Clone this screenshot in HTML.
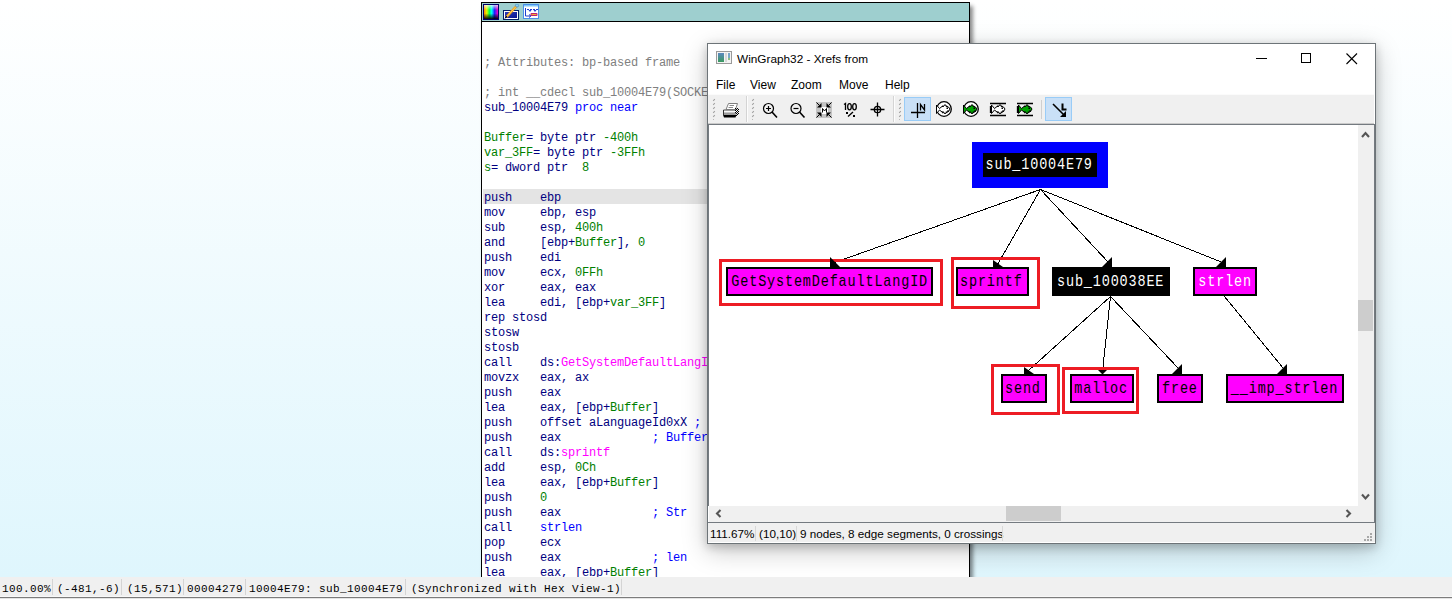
<!DOCTYPE html>
<html><head><meta charset="utf-8">
<style>
*{margin:0;padding:0;box-sizing:border-box}
html,body{width:1452px;height:599px;overflow:hidden}
body{position:relative;background:linear-gradient(to bottom,#ffffff 0px,#dff6fd 577px);font-family:"Liberation Sans",sans-serif}
.abs{position:absolute}
/* IDA window */
#ida{position:absolute;left:481px;top:2px;width:489px;height:620px;border:1px solid #000;background:#fff;box-shadow:3px 4px 4px rgba(0,0,0,.45)}
#idatitle{position:absolute;left:0;top:0;width:487px;height:19px;background:#9ecfcf;border-bottom:1px solid #000}
#code{position:absolute;left:2px;top:0;font-family:"Liberation Mono",monospace;font-size:12px;letter-spacing:-0.2px;color:#000080}
#code div{height:15px;line-height:19px;white-space:pre}
.g{color:#808080}.b{color:#0000ff}.n{color:#000080}.gr{color:#008000}.m{color:#ff00ff}
.hl{background:#e4e4e4;width:487px;margin-left:-1px;padding-left:1px}
/* status bar */
#sb{position:absolute;left:0;top:577px;width:1452px;height:22px;background:linear-gradient(to bottom,#f0f0f0 0,#f0f0f0 19px,#f8f8f8 19px,#f8f8f8 20px,#7c7c7c 20px,#7c7c7c 21px,#e4e4e4 21px);font-family:"Liberation Mono",monospace;font-size:11px;letter-spacing:0.4px;color:#000}
#sb span{position:absolute;top:6px;white-space:pre}
#sb i{position:absolute;top:2px;width:1px;height:16px;background:#d4d4d4}
/* wingraph */
#wg{position:absolute;left:707px;top:43px;width:669px;height:501px;border:1px solid #6d7478;background:#fff;box-shadow:0 3px 9px rgba(0,0,0,.2),0 7px 24px rgba(0,0,0,.22)}
.menu{top:78px;font-size:12px;color:#000}
.wgs{top:527px;font-size:11.7px;color:#000;white-space:pre}
</style></head><body>

<div id="ida">
  <div id="idatitle"></div>
  <svg class="abs" style="left:1px;top:1px" width="60" height="18" viewBox="483 4 60 18">
  <defs>
   <linearGradient id="hue" x1="0" x2="1" y1="0" y2="0">
    <stop offset="0" stop-color="#ff8000"/><stop offset=".2" stop-color="#e0ff00"/><stop offset=".38" stop-color="#00ff40"/><stop offset=".55" stop-color="#00ffff"/><stop offset=".75" stop-color="#2020ff"/><stop offset="1" stop-color="#ff00c0"/>
   </linearGradient>
   <linearGradient id="shade" x1="0" x2="0" y1="0" y2="1">
    <stop offset="0" stop-color="#fff" stop-opacity=".75"/><stop offset=".35" stop-color="#fff" stop-opacity="0"/><stop offset=".6" stop-color="#000" stop-opacity="0"/><stop offset="1" stop-color="#000" stop-opacity=".95"/>
   </linearGradient>
   <linearGradient id="blu" x1="0" x2="1" y1="0" y2="1"><stop offset="0" stop-color="#2a3ab8"/><stop offset="1" stop-color="#0a1690"/></linearGradient>
  </defs>
  <rect x="483" y="4" width="16" height="16" fill="#00006a"/>
  <rect x="484" y="5" width="14" height="14" fill="url(#hue)"/>
  <rect x="484" y="5" width="14" height="14" fill="url(#shade)"/>
  <rect x="503" y="10" width="16" height="10" fill="#00206a"/>
  <rect x="504" y="11" width="14" height="8" fill="#fff"/>
  <rect x="505" y="12" width="12" height="6" fill="url(#blu)"/>
  <path d="M506.5 17 L516.5 6" stroke="#f0a020" stroke-width="2.6"/>
  <path d="M506.5 17 L516.5 6" stroke="#ffe070" stroke-width="0.8"/>
  <circle cx="517" cy="5.5" r="1.6" fill="#8ad0f0" stroke="#3a80c0" stroke-width=".6"/>
  <path d="M505 18.5 L507 16" stroke="#000" stroke-width="1"/>
  <rect x="523" y="4" width="16" height="15" rx="0.5" fill="#4a8ee8"/>
  <rect x="524" y="6" width="14" height="12" fill="#fff"/>
  <rect x="524" y="5" width="14" height="1.5" fill="#7ec8f8"/>
  <path d="M525.5 8 V16 H530" stroke="#2040d0" stroke-width="1" fill="none"/>
  <path d="M529 14.5 L531 16 L529 17.5" stroke="#2040d0" stroke-width="1" fill="none"/>
  <path d="M527 9.5 H538" stroke="#2040d0" stroke-width="1" stroke-dasharray="2 1"/><path d="M528.5 10 L530 12 L531.5 10 Z M533.5 10 L535 12 L536.5 10 Z" fill="#2040d0"/>
  <rect x="530.5" y="13" width="7" height="3" rx="1" fill="#c02070"/>
  <rect x="531.5" y="14" width="5" height="1" fill="#f0b030"/>
  </svg>
  <div id="code" style="top:21px">
<div> </div>
<div> </div>
<div class="g">; Attributes: bp-based frame</div>
<div> </div>
<div class="g">; int __cdecl sub_10004E79(SOCKET s)</div>
<div>sub_10004E79 <span class="b">proc near</span></div>
<div> </div>
<div><span class="gr">Buffer</span>= byte ptr <span class="gr">-400h</span></div>
<div><span class="gr">var_3FF</span>= byte ptr <span class="gr">-3FFh</span></div>
<div><span class="gr">s</span>= dword ptr  <span class="gr">8</span></div>
<div> </div>
<div class="hl">push    ebp</div>
<div>mov     ebp, esp</div>
<div>sub     esp, <span class="gr">400h</span></div>
<div>and     [ebp+<span class="gr">Buffer</span>], <span class="gr">0</span></div>
<div>push    edi</div>
<div>mov     ecx, <span class="gr">0FFh</span></div>
<div>xor     eax, eax</div>
<div>lea     edi, [ebp+<span class="gr">var_3FF</span>]</div>
<div>rep stosd</div>
<div>stosw</div>
<div>stosb</div>
<div>call    ds:<span class="m">GetSystemDefaultLangID</span></div>
<div>movzx   eax, ax</div>
<div>push    eax</div>
<div>lea     eax, [ebp+<span class="gr">Buffer</span>]</div>
<div>push    offset aLanguageId0xX <span class="b">; "Language Id: 0x%X"</span></div>
<div>push    eax             <span class="b">; Buffer</span></div>
<div>call    ds:<span class="m">sprintf</span></div>
<div>add     esp, <span class="gr">0Ch</span></div>
<div>lea     eax, [ebp+<span class="gr">Buffer</span>]</div>
<div>push    <span class="gr">0</span></div>
<div>push    eax             <span class="b">; Str</span></div>
<div>call    <span class="b">strlen</span></div>
<div>pop     ecx</div>
<div>push    eax             <span class="b">; len</span></div>
<div>lea     eax, [ebp+<span class="gr">Buffer</span>]</div>
<div>push    [ebp+<span class="gr">s</span>]</div>
  </div>
</div>

<div id="sb">
  <span style="left:2px">100.00%</span><i style="left:52px"></i>
  <span style="left:57px">(-481,-6)</span><i style="left:121px"></i>
  <span style="left:127px">(15,571)</span><i style="left:183px"></i>
  <span style="left:187px">00004279</span><i style="left:245px"></i>
  <span style="left:249px">10004E79: sub_10004E79</span><i style="left:405px"></i>
  <span style="left:411px">(Synchronized with Hex View-1)</span><i style="left:621px"></i>
</div>

<div id="wg"></div>
<!-- wingraph title -->
<svg class="abs" style="left:716px;top:51px" width="16" height="13" viewBox="0 0 16 13">
<rect x="0.5" y="0.5" width="15" height="12" fill="#f4f4f4" stroke="#9a9a9a"/>
<defs><linearGradient id="wgi" x1="0" x2="0" y1="0" y2="1"><stop offset="0" stop-color="#5b88c0"/><stop offset="1" stop-color="#3a9a5e"/></linearGradient></defs>
<rect x="2" y="2" width="6" height="9" fill="url(#wgi)"/>
<rect x="9" y="2" width="2" height="9" fill="#d8d8d8"/>
<rect x="12" y="2" width="2" height="5" fill="#7aa8c8"/>
<rect x="12" y="7" width="2" height="2" fill="#8cc080"/>
</svg>
<div class="abs" id="wgtitle" style="left:737px;top:52px;font-size:11.8px;color:#000;white-space:pre">WinGraph32 - Xrefs from</div>
<svg class="abs" style="left:1250px;top:48px" width="115" height="20" viewBox="1250 48 115 20">
<line x1="1256" y1="58.5" x2="1267" y2="58.5" stroke="#000" stroke-width="1"/>
<rect x="1301.5" y="53.5" width="9" height="9" fill="none" stroke="#000" stroke-width="1"/>
<path d="M1346.5 53.5 L1357 64 M1357 53.5 L1346.5 64" stroke="#000" stroke-width="1.1"/>
</svg>
<!-- menu -->
<div class="abs menu" style="left:716px">File</div>
<div class="abs menu" style="left:750px">View</div>
<div class="abs menu" style="left:791px">Zoom</div>
<div class="abs menu" style="left:839px">Move</div>
<div class="abs menu" style="left:885px">Help</div>
<!-- toolbar -->
<div class="abs" style="left:708px;top:94px;width:666px;height:1px;background:#fbfbfb"></div>
<div class="abs" style="left:708px;top:95px;width:666px;height:28px;background:#f0f0f0"></div>
<div class="abs" style="left:708px;top:123px;width:666px;height:1px;background:#cacaca"></div>
<div class="abs" style="left:708px;top:124px;width:666px;height:1px;background:#747a80"></div>
<svg class="abs" style="left:708px;top:95px" width="666" height="28" viewBox="708 95 666 28">
<g stroke="#a0a0a0" stroke-width="1.1" fill="none"><path d="M713.2 100.8 L714.8 99.2" /><path d="M713.2 104.8 L714.8 103.2" /><path d="M713.2 108.8 L714.8 107.2" /><path d="M713.2 112.8 L714.8 111.2" /><path d="M713.2 116.8 L714.8 115.2" /><rect x="713" y="119" width="1" height="1" stroke="none" fill="#bbb"/><path d="M752.2 100.8 L753.8 99.2" /><path d="M752.2 104.8 L753.8 103.2" /><path d="M752.2 108.8 L753.8 107.2" /><path d="M752.2 112.8 L753.8 111.2" /><path d="M752.2 116.8 L753.8 115.2" /><rect x="752" y="119" width="1" height="1" stroke="none" fill="#bbb"/><path d="M899.2 100.8 L900.8 99.2" /><path d="M899.2 104.8 L900.8 103.2" /><path d="M899.2 108.8 L900.8 107.2" /><path d="M899.2 112.8 L900.8 111.2" /><path d="M899.2 116.8 L900.8 115.2" /><rect x="899" y="119" width="1" height="1" stroke="none" fill="#bbb"/></g>
<rect x="746" y="96" width="1" height="26" fill="#d4d4d4"/><rect x="747" y="96" width="1" height="26" fill="#fdfdfd"/>
<rect x="893" y="96" width="1" height="26" fill="#d4d4d4"/><rect x="894" y="96" width="1" height="26" fill="#fdfdfd"/>
<rect x="1041" y="100" width="1" height="19" fill="#cfcfcf"/>
<!-- printer -->
<path d="M728.5 103.5 H737.5 L735.5 109.5 H726 Z" fill="#fff" stroke="#808080"/>
<path d="M729.5 105.5 H734 M728.5 107.5 H733" stroke="#8a8a8a"/>
<path d="M723.5 110 H736" stroke="#7a7a7a" stroke-width="1.4"/>
<rect x="723" y="111" width="13" height="1.5" fill="#fafafa"/>
<rect x="723" y="112.5" width="13" height="1.8" fill="#9a9a9a"/>
<path d="M723 114.8 H736.5 L735.5 117.5 H724 Z" fill="#000"/>
<path d="M723.5 110 V115" stroke="#333" stroke-width="1"/>
<g fill="#000"><rect x="735" y="108" width="1" height="1"/><rect x="737" y="108" width="1" height="1"/><rect x="736" y="109" width="1" height="1"/><rect x="738" y="109" width="1" height="1"/><rect x="735" y="110" width="1" height="1"/><rect x="737" y="110" width="1" height="1"/><rect x="736" y="111" width="1" height="1"/><rect x="738" y="111" width="1" height="1"/><rect x="735" y="112" width="1" height="1"/><rect x="737" y="112" width="1" height="1"/><rect x="736" y="113" width="1" height="1"/><rect x="738" y="113" width="1" height="1"/><rect x="737" y="114" width="1" height="1"/><rect x="736" y="115" width="1" height="1"/></g>
<!-- zoom in/out -->
<g fill="none" stroke="#000" stroke-width="1.2">
<circle cx="768.5" cy="108.5" r="5"/><path d="M772 112 L777 117.5" stroke-width="1.6"/><path d="M766 108.5 H771 M768.5 106 V111"/>
<circle cx="796" cy="108.5" r="5"/><path d="M799.5 112 L804.5 117.5" stroke-width="1.6"/><path d="M793.5 108.5 H798.5"/>
</g>
<!-- fit -->
<rect x="816" y="102" width="16" height="16" fill="#c4c4c4"/>
<rect x="821" y="107" width="7" height="7" fill="#fff"/>
<path d="M822.5 112.5 V108.5 L824.5 111 L826.5 108.5 V112.5" stroke="#000" stroke-width="1" fill="none"/>
<g fill="#000">
<path d="M821.5 107.5 V103 L817 107.5 Z"/><path d="M826.5 107.5 V103 L831 107.5 Z"/>
<path d="M821.5 112.5 V117 L817 112.5 Z"/><path d="M826.5 112.5 V117 L831 112.5 Z"/>
</g>
<path d="M816.5 102.5 L819.5 105.5 M831.5 102.5 L828.5 105.5 M816.5 117.5 L819.5 114.5 M831.5 117.5 L828.5 114.5" stroke="#000" stroke-width="1"/>
<!-- 100% -->
<g fill="none" stroke="#000" stroke-width="1.3">
<path d="M844 104.5 L845.5 103.5 V110"/>
<ellipse cx="849.5" cy="106.8" rx="1.8" ry="3.1"/>
<ellipse cx="854.5" cy="106.8" rx="1.8" ry="3.1"/>
<path d="M848 116.5 L853 112"/>
</g>
<rect x="846" y="112" width="2" height="2" fill="#000"/><rect x="853" y="115" width="2" height="2" fill="#000"/>
<!-- crosshair -->
<g stroke="#000" fill="none" stroke-width="1.3"><path d="M870.5 109.5 H884.5 M877.5 102.5 V116.5"/><circle cx="877.5" cy="109.5" r="3.2"/></g>
<!-- pressed buttons -->
<rect x="904.5" y="97.5" width="26" height="23" fill="#c9e0f7" stroke="#99ccf7"/>
<path d="M911 112.5 H925 M917.5 103 V118" stroke="#000" stroke-width="1.3"/>
<path d="M920.5 110.5 V104.5 L924.5 110 V104" stroke="#000" stroke-width="1.3" fill="none"/>
<rect x="1045.5" y="97.5" width="26" height="23" fill="#c9e0f7" stroke="#99ccf7"/>
<path d="M1053 104 L1064 115" stroke="#000" stroke-width="1.6"/><path d="M1066 117 L1066 111 L1060 117 Z" fill="#000"/>
<path d="M1062.5 103.5 V109.5 H1066.5" stroke="#000" stroke-width="2" fill="none"/>
<!-- fish circles -->
<circle cx="944" cy="109" r="7.3" fill="#fff" stroke="#000" stroke-width="1.3"/>
<g transform="translate(935 101)"><path d="M1.5 4 L4.5 7.5 L7 5.5 L8.5 5.5 L10 3.5 L11.5 5.5 L13.5 6 L15 8 L13.5 10.5 L11.5 11 L10 13 L8.5 11 L7 11 L4.5 9 L1.5 12.5 Z" fill="#fff" stroke="#000" stroke-width="1" stroke-linejoin="miter"/><rect x="11.5" y="6.5" width="1.5" height="1.5" fill="#000"/><path d="M12.5 9.5 L14 10.5" stroke="#000" stroke-width="1.2"/><path d="M6.5 5.8 L8 4 L9 5.8 Z M10.5 5.8 L11.8 4.3 L13 6 Z M6.5 10.8 L8 12.8 L9 10.8 Z M10.5 10.8 L11.8 12.5 L13 10.5 Z" fill="#000"/></g>
<circle cx="971" cy="109" r="7.3" fill="#fff" stroke="#000" stroke-width="1.3"/>
<g transform="translate(962 101)"><path d="M1.5 4 L4.5 7.5 L7 5.5 L8.5 5.5 L10 3.5 L11.5 5.5 L13.5 6 L15 8 L13.5 10.5 L11.5 11 L10 13 L8.5 11 L7 11 L4.5 9 L1.5 12.5 Z" fill="#00a000" stroke="#000" stroke-width="1" stroke-linejoin="miter"/><rect x="11.5" y="6.5" width="1.5" height="1.5" fill="#000"/><path d="M12.5 9.5 L14 10.5" stroke="#000" stroke-width="1.2"/><path d="M6.5 5.8 L8 4 L9 5.8 Z M10.5 5.8 L11.8 4.3 L13 6 Z M6.5 10.8 L8 12.8 L9 10.8 Z M10.5 10.8 L11.8 12.5 L13 10.5 Z" fill="#000"/></g>
<path d="M990 103.5 H1006 M990 115.5 H1006 M1017 103.5 H1033 M1017 115.5 H1033" stroke="#000" stroke-width="1.3"/>
<path d="M990.5 106 V113" stroke="#000" stroke-width="1.3"/><path d="M1017.5 106 V113" stroke="#000" stroke-width="1.3"/>
<g transform="translate(990 101)"><path d="M1.5 4 L4.5 7.5 L7 5.5 L8.5 5.5 L10 3.5 L11.5 5.5 L13.5 6 L15 8 L13.5 10.5 L11.5 11 L10 13 L8.5 11 L7 11 L4.5 9 L1.5 12.5 Z" fill="#fff" stroke="#000" stroke-width="1" stroke-linejoin="miter"/><rect x="11.5" y="6.5" width="1.5" height="1.5" fill="#000"/><path d="M12.5 9.5 L14 10.5" stroke="#000" stroke-width="1.2"/><path d="M6.5 5.8 L8 4 L9 5.8 Z M10.5 5.8 L11.8 4.3 L13 6 Z M6.5 10.8 L8 12.8 L9 10.8 Z M10.5 10.8 L11.8 12.5 L13 10.5 Z" fill="#000"/></g><g transform="translate(1017 101)"><path d="M1.5 4 L4.5 7.5 L7 5.5 L8.5 5.5 L10 3.5 L11.5 5.5 L13.5 6 L15 8 L13.5 10.5 L11.5 11 L10 13 L8.5 11 L7 11 L4.5 9 L1.5 12.5 Z" fill="#00a000" stroke="#000" stroke-width="1" stroke-linejoin="miter"/><rect x="11.5" y="6.5" width="1.5" height="1.5" fill="#000"/><path d="M12.5 9.5 L14 10.5" stroke="#000" stroke-width="1.2"/><path d="M6.5 5.8 L8 4 L9 5.8 Z M10.5 5.8 L11.8 4.3 L13 6 Z M6.5 10.8 L8 12.8 L9 10.8 Z M10.5 10.8 L11.8 12.5 L13 10.5 Z" fill="#000"/></g>
</svg>
<!-- scrollbars -->
<div class="abs" style="left:708px;top:124px;width:1px;height:382px;background:#747a80"></div>
<div class="abs" style="left:1358px;top:125px;width:16px;height:397px;background:#f0f0f0"></div>
<div class="abs" style="left:709px;top:506px;width:649px;height:16px;background:#f0f0f0"></div>
<div class="abs" style="left:1374px;top:124px;width:1px;height:398px;background:#747a80"></div>
<div class="abs" style="left:1358px;top:300px;width:15px;height:31px;background:#cdcdcd"></div>
<div class="abs" style="left:1006px;top:506px;width:55px;height:15px;background:#cdcdcd"></div>
<svg class="abs" style="left:708px;top:125px" width="666" height="397" viewBox="708 125 666 397">
<g fill="none" stroke="#555" stroke-width="2.1">
<path d="M1362 137 L1365.5 133 L1369 137"/>
<path d="M1362 494.5 L1365.5 498.5 L1369 494.5"/>
<path d="M720.5 510 L717 513.5 L720.5 517"/>
<path d="M1346.5 510 L1350 513.5 L1346.5 517"/>
</g>
</svg>
<div class="abs" style="left:708px;top:522px;width:667px;height:1px;background:#747a80"></div>
<div class="abs" style="left:708px;top:523px;width:667px;height:19px;background:#f0f0f0"></div>
<!-- wg status -->
<div class="abs wgs" style="left:710px">111.67%</div>
<div class="abs wgs" style="left:759px">(10,10)</div>
<div class="abs wgs" style="left:800px">9 nodes, 8 edge segments, 0 crossings</div>
<div class="abs" style="left:755px;top:526px;width:1px;height:15px;background:#d8d8d8"></div>
<div class="abs" style="left:796px;top:526px;width:1px;height:15px;background:#d8d8d8"></div>
<div class="abs" style="left:1002px;top:526px;width:1px;height:15px;background:#d8d8d8"></div>
<svg class="abs" style="left:1362px;top:530px" width="12" height="12" viewBox="1362 530 12 12">
<g fill="#a8a8a8"><rect x="1370" y="533" width="2" height="2"/><rect x="1367" y="536" width="2" height="2"/><rect x="1370" y="536" width="2" height="2"/><rect x="1364" y="539" width="2" height="2"/><rect x="1367" y="539" width="2" height="2"/><rect x="1370" y="539" width="2" height="2"/></g>
</svg>
<!-- graph -->
<svg class="abs" style="left:709px;top:125px" width="649" height="381" viewBox="709 125 649 381" font-family="Liberation Mono" font-size="13.5" letter-spacing="0.85">
<rect x="972" y="142" width="136" height="46" fill="#0000ff"/>
<rect x="983" y="153" width="114" height="24" fill="#000"/>
<text fill="#fff" transform="translate(985.5 168.5) scale(1 1.18)" x="0" y="0">sub_10004E79</text>
<g stroke="#000" stroke-width="1" shape-rendering="crispEdges" fill="none">
<path d="M1040.5 189.5 L834.5 262.5 M1040.5 189.5 L997.5 264.5 M1040.5 189.5 L1108.5 262.5 M1040.5 189.5 L1222.5 262.5"/>
<path d="M1110.5 296.5 L1028.5 370.5 M1110.5 296.5 L1102.5 371.5 M1110.5 296.5 L1178.5 368.5 M1224.5 296.5 L1283.5 368.5"/>
</g>
<g fill="none" stroke="#ed1c24" stroke-width="3">
<rect x="720.5" y="260.5" width="221" height="44"/>
<rect x="952.5" y="258.5" width="86" height="49"/>
<rect x="992.5" y="365.5" width="66" height="48"/>
<rect x="1063.5" y="368.5" width="74" height="44"/>
</g>
<g stroke="#000" stroke-width="2" fill="#ff00ff">
<rect x="727" y="268" width="205" height="27"/>
<rect x="957" y="268" width="71" height="27"/>
<rect x="1194" y="268" width="62" height="27"/>
<rect x="1002" y="375" width="44" height="27"/>
<rect x="1071" y="375" width="62" height="27"/>
<rect x="1158" y="375" width="44" height="27"/>
<rect x="1227" y="375" width="116" height="27"/>
</g>
<rect x="1052" y="267" width="118" height="29" fill="#000"/>
<g fill="#000">
<path d="M830 257 V267 H840 Z"/>
<path d="M993 260 V267 H1003 Z"/>
<path d="M1112 257 V267 H1102 Z"/>
<path d="M1226 257 V267 H1216 Z"/>
<path d="M1024 367 V374 H1034 Z"/>
<path d="M1098 370 H1107 L1102.5 374.5 Z"/>
<path d="M1182 364 V374 H1172 Z"/>
<path d="M1287 364 V374 H1277 Z"/>
</g>
<g fill="#000">
<text transform="translate(731.3 285.5) scale(1 1.18)" x="0" y="0">GetSystemDefaultLangID</text>
<text transform="translate(960 285.5) scale(1 1.18)" x="0" y="0">sprintf</text>
<text transform="translate(1005 392.5) scale(1 1.18)" x="0" y="0">send</text>
<text transform="translate(1074.3 392.5) scale(1 1.18)" x="0" y="0">malloc</text>
<text transform="translate(1162 392.5) scale(1 1.18)" x="0" y="0">free</text>
<text transform="translate(1230.8 392.5) scale(1 1.18)" x="0" y="0">__imp_strlen</text>
</g>
<g fill="#fff">
<text transform="translate(1057 285.5) scale(1 1.18)" x="0" y="0">sub_100038EE</text>
<text transform="translate(1198.3 285.5) scale(1 1.18)" x="0" y="0">strlen</text>
</g>
</svg>


</body></html>
